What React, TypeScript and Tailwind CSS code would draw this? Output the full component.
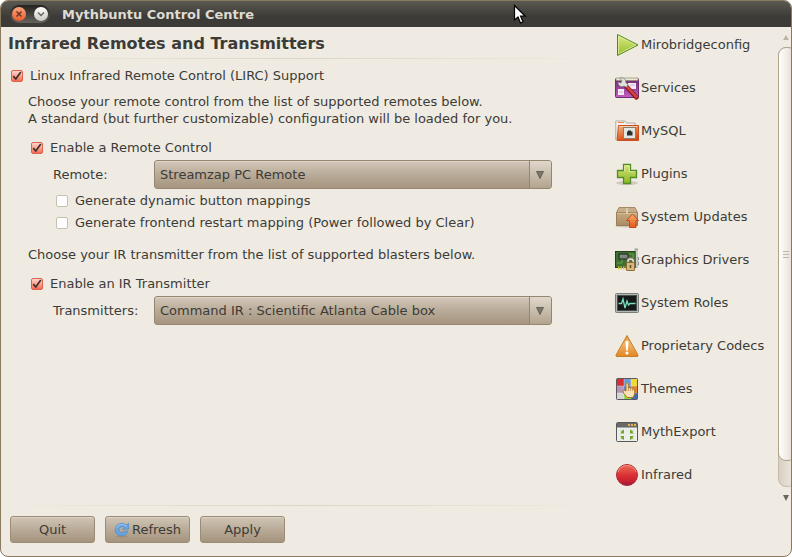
import { useId, useState } from 'react';
import type { ReactNode } from 'react';

interface CheckRowProps {
  label: string;
  checked?: boolean;
  className?: string;
}

const CheckRow = ({ label, checked = false, className = '' }: CheckRowProps) => {
  const [on, setOn] = useState(checked);

  return (
    <label className={`flex h-5 items-center gap-[7px] ${className}`}>
      <span className="grid h-3 w-3 shrink-0">
        <input
          type="checkbox"
          checked={on}
          onChange={(e) => setOn(e.target.checked)}
          className="col-start-1 row-start-1 mt-px h-3 w-3 appearance-none rounded-xs border border-[#c9bfae] bg-white checked:border-[#e0604a] checked:bg-linear-to-b checked:from-[#fbd5cc] checked:to-[#f26a52]"
        />
        {on && (
          <svg className="pointer-events-none col-start-1 row-start-1 mt-px h-3 w-3" viewBox="0 0 12 12" fill="none">
            <path d="M2.2 6.2 L4.8 9 L9.8 2" stroke="#3a2f2b" strokeWidth="1.7" />
          </svg>
        )}
      </span>
      <span>{label}</span>
    </label>
  );
};

interface SelectRowProps {
  label: string;
  options: string[];
}

const SelectRow = ({ label, options }: SelectRowProps) => {
  const id = useId();

  return (
    <div className="mt-[3px] flex items-center pr-[49px] pl-[52px]">
      <label htmlFor={id} className="w-[101px] shrink-0">
        {label}
      </label>
      <div className="relative flex-1">
        <select
          id={id}
          className="block h-[29px] w-full appearance-none rounded-[3px] border border-[#96866f] bg-linear-to-b from-[#d3c8b9] via-[#b9ab98] to-[#a6957f] pr-7 pl-[5px] shadow-[inset_0_1px_0_#ded5c8]"
        >
          {options.map((option) => (
            <option key={option}>{option}</option>
          ))}
        </select>
        <span className="pointer-events-none absolute inset-y-px right-px flex w-[22px] items-center justify-center rounded-r-xs border-l border-[#96866f] bg-linear-to-b from-[#e0d8cb] to-[#b2a48f] pr-0.5">
          <svg width="8" height="8" viewBox="0 0 8 8">
            <path d="M0.5 0.5 H7.5 L4 7.5 Z" fill="#7c776b" stroke="#57534a" strokeWidth="0.8" />
          </svg>
        </span>
      </div>
    </div>
  );
};

const Separator = () => (
  <div className="h-px shrink-0 bg-linear-to-r from-transparent via-[#dcd5c2] to-transparent" />
);

const ActionButton = ({ children }: { children: ReactNode }) => (
  <button
    type="button"
    className="flex h-[27px] w-[85px] items-center justify-center gap-0.5 rounded-[3px] border border-[#9c8c75] bg-linear-to-b from-[#d0c5b6] via-[#b9ab98] to-[#a5947d] shadow-[inset_0_1px_0_#dcd3c6]"
  >
    {children}
  </button>
);

const RefreshIcon = () => (
  <svg width="16" height="16" viewBox="0 0 16 16">
    <ellipse cx="8" cy="14.5" rx="6" ry="1.2" fill="#8c7f6d" opacity=".5" />
    <path
      d="M14.5 1.2 V7.2 H8.5 L10.4 5.3 C7.5 3.8 4.8 5.4 4.9 8 C5 11 9 11.6 10.3 9.3 H13.9 C12.4 15.3 2 15.5 1.2 8.4 C.8 2 7.8-.5 12.6 3.1 Z"
      fill="#6aa5e2"
      stroke="#4f89ca"
      strokeWidth=".7"
    />
    <path d="M2.5 6.2 C3.6 2.4 8.6 1.3 12.4 4.2" fill="none" stroke="#a9cdf2" strokeWidth=".9" />
  </svg>
);

const PlayIcon = () => (
  <>
    <defs>
      <linearGradient id="play" x2="0" y2="1">
        <stop stopColor="#dcea86" />
        <stop offset="1" stopColor="#94bd2b" />
      </linearGradient>
    </defs>
    <path d="M2.5 1.5 L23 12 L2.5 22.5 Z" fill="url(#play)" stroke="#4c8a1c" />
    <path d="M3.5 3.2 L20.8 12 L3.5 20.8 Z" fill="none" stroke="#e6f0a6" strokeWidth=".7" />
  </>
);

const ServicesIcon = () => (
  <>
    <defs>
      <linearGradient id="services" x2="0" y2="1">
        <stop stopColor="#6d2a6c" />
        <stop offset="1" stopColor="#c25fc4" />
      </linearGradient>
    </defs>
    <rect x=".5" y="2.5" width="23" height="19" rx="1" fill="url(#services)" stroke="#702c72" />
    <path d="M1 2 H23 V4.5 H1 Z" fill="#e8e8d5" stroke="#8c8c6d" strokeWidth=".7" />
    <rect x="3" y="13" width="6" height="6" fill="#f5eaf5" />
    <rect x="13" y="7" width="8" height="6" fill="#f5eaf5" />
    <path d="M15 9 H20 M4 16 H8" stroke="#cbb3cf" />
    <path d="M11 10 L21.5 21.5" stroke="#821616" strokeWidth="4.4" strokeLinecap="round" />
    <path d="M11.3 9.8 L21.5 21" stroke="#d34242" strokeWidth="2.6" strokeLinecap="round" />
    <path
      d="M4.5 2.2 L7 4.5 L6 7 L3 6.2 C3 10 6.3 11.5 9 10 L11.2 11.2 L13 8.8 L10.8 6.5 C11 3 8 .8 4.5 2.2 Z"
      fill="#e1e3dc"
      stroke="#81857c"
      strokeWidth=".8"
    />
  </>
);

const FolderIcon = () => (
  <>
    <defs>
      <linearGradient id="folder" x2=".4" y2="1">
        <stop stopColor="#f0bb88" />
        <stop offset="1" stopColor="#dc450f" />
      </linearGradient>
    </defs>
    <path d="M.8 21 V2 H10 L11.5 4 H20 V7" fill="#f4f1ed" stroke="#a9a49c" strokeWidth=".9" />
    <path d="M3 3.5 H9" stroke="#ef8650" />
    <path d="M2 21.5 L3.5 6.5 H23.5 V21.5 Z" fill="url(#folder)" stroke="#c8501e" />
    <path d="M4.5 7.5 H22.5" stroke="#f7d1ae" />
    <rect x="8.5" y="8.5" width="12" height="11" fill="#e4e6e2" stroke="#8b7d77" />
    <path d="M12 16.5 V12.5 H13 V11.5 H16 V12.5 H17.5 V16.5 Z" fill="#292e30" />
  </>
);

const PlusIcon = () => (
  <>
    <defs>
      <linearGradient id="plus" x2="0" y2="1">
        <stop stopColor="#d4e67a" />
        <stop offset="1" stopColor="#8cb626" />
      </linearGradient>
    </defs>
    <ellipse cx="12" cy="21" rx="11" ry="2" fill="#cfc9c0" />
    <path
      d="M8.5 2.5 H15.5 V8.5 H21.5 V15.5 H15.5 V21.5 H8.5 V15.5 H2.5 V8.5 H8.5 Z"
      fill="url(#plus)"
      stroke="#528c25"
      strokeWidth="1.3"
    />
    <path d="M9.7 9.7 V3.7 H14.3 V9.7 H20.3" fill="none" stroke="#e8f3aa" strokeWidth=".8" />
  </>
);

const PackageIcon = () => (
  <>
    <defs>
      <linearGradient id="package" x2="0" y2="1">
        <stop stopColor="#c8aa80" />
        <stop offset="1" stopColor="#a98a62" />
      </linearGradient>
      <linearGradient id="arrow" x2="0" y2="1">
        <stop stopColor="#f7af6c" />
        <stop offset="1" stopColor="#e85719" />
      </linearGradient>
    </defs>
    <ellipse cx="11" cy="21" rx="11" ry="1.5" fill="#ccc4b8" />
    <path d="M1.5 7.5 H22.5 V20.5 H1.5 Z" fill="url(#package)" stroke="#9b7d58" />
    <path d="M1.5 7.5 L4 2.5 H20 L22.5 7.5 Z" fill="#c7ad88" stroke="#a58a66" />
    <path d="M11 3 H13 V9 H11 Z" fill="#dccdb2" />
    <path d="M2.5 8.5 H21.5" stroke="#dac39e" strokeWidth=".8" />
    <path d="M17.5 9 L23.5 15.5 H21 V22.5 H14.5 V15.5 H11.5 Z" fill="url(#arrow)" stroke="#c64a1a" />
  </>
);

const CardIcon = () => (
  <>
    <rect x=".5" y="3.5" width="20" height="16" fill="#3f7030" stroke="#24401b" />
    <path d="M2 15 H7 V9 M13 15 V12 H18 V6 H13" fill="none" stroke="#65a548" />
    <rect x="4" y="6" width="9" height="5" fill="#808681" stroke="#1d221c" />
    <path d="M3 20 H12" stroke="#e1c52b" strokeWidth="3" strokeDasharray="1.5 1" />
    <path d="M19.5 1.5 H23 M21.5 1 V20" stroke="#9ea2a0" strokeWidth="1.8" fill="none" />
    <path d="M21.5 2 V19" stroke="#e3e4e2" strokeWidth=".7" />
    <path d="M22.5 9.5 H23.5 V12 H22.5 M22.5 14 H23.5 V17 H22.5" fill="none" stroke="#8c908d" />
    <path d="M13 14.5 V13 C13 10 18.2 10 18.2 13 V14.5" fill="none" stroke="#7e7157" strokeWidth="2.8" />
    <path d="M13 14.5 V13 C13 10.4 18.2 10.4 18.2 13 V14.5" fill="none" stroke="#e8e5dc" strokeWidth="1.4" />
    <rect x="11.5" y="14.5" width="8" height="8" rx=".5" fill="#d8b77d" stroke="#8c6d3d" />
    <path d="M15.5 17 V20" stroke="#5c4728" strokeWidth="1.5" />
  </>
);

const MonitorIcon = () => (
  <>
    <rect x=".5" y="2.5" width="23" height="19" rx="1" fill="#b4b6b3" stroke="#7b7d79" />
    <rect x="2.5" y="4.5" width="19" height="15" fill="#151a18" stroke="#4b504c" />
    <path
      d="M3.5 12.5 H6.5 L8 8 L10 17 L12 10 L13.5 14 L15 12.5 H20.5"
      fill="none"
      stroke="#7ce0c0"
      strokeWidth="1.3"
    />
  </>
);

const WarningIcon = () => (
  <>
    <defs>
      <linearGradient id="warning" x2="0" y2="1">
        <stop stopColor="#e8963c" />
        <stop offset=".4" stopColor="#f0b567" />
        <stop offset="1" stopColor="#e48421" />
      </linearGradient>
    </defs>
    <path
      d="M12 1.5 L23 21 Q23.5 22.5 22 22.5 H2 Q.5 22.5 1 21 Z"
      fill="url(#warning)"
      stroke="#c6812c"
      strokeLinejoin="round"
    />
    <path d="M10.5 7.5 Q12 6 13.5 7.5 L12.9 16.5 H11.1 Z" fill="#fff" />
    <circle cx="12" cy="19" r="1.6" fill="#fff" />
  </>
);

const ThemesIcon = () => (
  <>
    <rect x="1.5" y="1.5" width="21" height="21" rx="1" fill="#4a76b8" />
    <path d="M2 2 H9 V9 H2 Z" fill="#d92f30" />
    <path d="M9 2 H16 V9 H9 Z" fill="#6e9bd2" />
    <path d="M16 2 H22 V9 H16 Z" fill="#f1d832" />
    <path d="M2 9 H9 V16 H2 Z" fill="#b396b5" />
    <path d="M16 9 H22 V16 H16 Z" fill="#e78328" />
    <path d="M2 16 H9 V22 H2 Z" fill="#d4d6d2" />
    <path d="M9 16 H16 V22 H9 Z" fill="#8ed837" />
    <path d="M16 16 H22 V22 H16 Z" fill="#3f6dad" />
    <path d="M9 2 V22 M16 2 V22 M2 9 H22 M2 16 H22" stroke="#fff" strokeWidth=".6" opacity=".5" />
    <rect x="1.5" y="1.5" width="21" height="21" rx="1" fill="none" stroke="#5d5560" />
    <path
      d="M11 14 V6.5 Q12.2 5 13.3 6.5 V11 Q14.6 9.8 15.6 11.2 Q17 10.3 17.7 11.8 Q19.6 11.4 19.7 13 V17 L18 20.5 H12 L8.5 16 Q7 13.3 9 13 Z"
      fill="#fae1b5"
      stroke="#a66b26"
      strokeWidth=".9"
    />
    <path d="M13.4 11 V14 M15.6 11.5 V14 M17.7 12 V14" stroke="#b67c38" strokeWidth=".8" />
  </>
);

const ExportIcon = () => (
  <>
    <rect x="1.5" y="2.5" width="21" height="19" rx="1" fill="#eceeeb" stroke="#565a56" />
    <path d="M2 3 H22 V7.5 H2 Z" fill="#666965" />
    <path d="M13 5 H21" stroke="#eab54f" strokeWidth="2" strokeDasharray="2 1" />
    <g fill="#73a72d">
      <path d="M5 9.5 L6.5 11 L9 9.5 V13.5 H5 L6.5 12 Z" />
      <path d="M19 9.5 L17.5 11 L15 9.5 V13.5 H19 L17.5 12 Z" />
      <path d="M5 20 L6.5 18.5 L9 20 V16 H5 L6.5 17.5 Z" />
      <path d="M19 20 L17.5 18.5 L15 20 V16 H19 L17.5 17.5 Z" />
    </g>
  </>
);

const RecordIcon = () => (
  <>
    <defs>
      <linearGradient id="record" x2="0" y2="1">
        <stop stopColor="#ec6f58" />
        <stop offset=".5" stopColor="#dc3236" />
        <stop offset=".8" stopColor="#c9202f" />
        <stop offset="1" stopColor="#861a4c" />
      </linearGradient>
    </defs>
    <circle cx="12" cy="12" r="10.5" fill="url(#record)" stroke="#b02a38" />
    <path d="M3 9 A9.5 9.5 0 0 1 21 9" fill="none" stroke="#f19a86" strokeWidth=".9" />
  </>
);

const modules = [
  { name: 'Mirobridgeconfig', icon: <PlayIcon /> },
  { name: 'Services', icon: <ServicesIcon /> },
  { name: 'MySQL', icon: <FolderIcon /> },
  { name: 'Plugins', icon: <PlusIcon /> },
  { name: 'System Updates', icon: <PackageIcon /> },
  { name: 'Graphics Drivers', icon: <CardIcon /> },
  { name: 'System Roles', icon: <MonitorIcon /> },
  { name: 'Proprietary Codecs', icon: <WarningIcon /> },
  { name: 'Themes', icon: <ThemesIcon /> },
  { name: 'MythExport', icon: <ExportIcon /> },
  { name: 'Infrared', icon: <RecordIcon /> },
];

const TitleBar = () => (
  <header className="flex h-[26px] shrink-0 items-center gap-3 bg-linear-to-b from-[#5a5951] to-[#3c3b37] to-60% pl-[9px]">
    <div className="flex h-[18px] w-[40px] items-center justify-between rounded-full bg-linear-to-b from-[#252421] to-[#65635b] px-0.5">
      <button
        type="button"
        aria-label="Close"
        className="flex h-3.5 w-3.5 items-center justify-center rounded-full bg-linear-to-b from-[#f8a27c] to-[#e95c2b]"
      >
        <svg width="8" height="8" viewBox="0 0 8 8">
          <path d="M1.5 1.5 L6.5 6.5 M6.5 1.5 L1.5 6.5" stroke="#6b3423" strokeWidth="1.5" />
        </svg>
      </button>
      <button
        type="button"
        aria-label="Minimise"
        className="flex h-3.5 w-3.5 items-center justify-center rounded-full bg-linear-to-b from-white to-[#cbc8c1]"
      >
        <svg width="8" height="8" viewBox="0 0 8 8">
          <path d="M1 2.5 L4 5.5 L7 2.5" fill="none" stroke="#66645f" strokeWidth="1.4" />
        </svg>
      </button>
    </div>
    <h1 className="font-bold text-[#dfdbd2]">Mythbuntu Control Centre</h1>
  </header>
);

const ScrollBar = () => (
  <div className="flex w-[13px] shrink-0 flex-col overflow-hidden pt-2">
    <svg className="ml-[5px] shrink-0" width="6" height="5" viewBox="0 0 6 5">
      <path d="M3 0 L6 5 H0 Z" fill="#bdb3a3" />
    </svg>
    <div className="mt-[7px] h-[440px] w-[18px] shrink-0 rounded-lg border border-[#c5bba9] bg-linear-to-r from-[#d9d0c2] to-[#efe9e0]">
      <div className="-mt-px -ml-px flex h-[414px] w-[18px] flex-col justify-center gap-0.5 rounded-lg border border-[#b0a28c] bg-linear-to-r from-white to-[#e0d8cc] pl-1">
        <div className="h-px w-1.5 bg-[#c0b6a6]" />
        <div className="h-px w-1.5 bg-[#c0b6a6]" />
        <div className="h-px w-1.5 bg-[#c0b6a6]" />
      </div>
    </div>
    <svg className="mt-2 ml-[5px] shrink-0" width="6" height="6" viewBox="0 0 6 6">
      <path d="M0 0 H6 L3 6 Z" fill="#6b675e" />
    </svg>
  </div>
);

const App = () => {
  return (
    <div className="flex min-h-screen flex-col overflow-hidden rounded-lg border border-[#8a7a60] bg-[#efebe3] font-['DejaVu_Sans',sans-serif] text-[13px] leading-[17px] text-[#3c3b37]">
      <TitleBar />

      <div className="flex flex-1">
        <main className="flex min-w-0 flex-1 flex-col">
          <h2 className="flex h-[31px] items-center pt-px pl-[7px] text-[16px] font-bold">
            Infrared Remotes and Transmitters
          </h2>
          <Separator />

          <CheckRow label="Linux Infrared Remote Control (LIRC) Support" checked className="mt-1.5 pl-2.5" />
          <p className="mt-2 pl-[27px]">
            Choose your remote control from the list of supported remotes below.
            <br />A standard (but further customizable) configuration will be loaded for you.
          </p>

          <CheckRow label="Enable a Remote Control" checked className="mt-2.5 pl-[30px]" />
          <SelectRow label="Remote:" options={['Streamzap PC Remote']} />
          <CheckRow label="Generate dynamic button mappings" className="mt-px pl-[55px]" />
          <CheckRow
            label="Generate frontend restart mapping (Power followed by Clear)"
            className="mt-0.5 pl-[55px]"
          />

          <p className="mt-3.5 pl-[27px]">Choose your IR transmitter from the list of supported blasters below.</p>
          <CheckRow label="Enable an IR Transmitter" checked className="mt-2.5 pl-[30px]" />
          <SelectRow label="Transmitters:" options={['Command IR : Scientific Atlanta Cable box']} />

          {/* Footer actions */}
          <div className="mt-auto pt-6">
            <Separator />
            <div className="flex gap-2.5 pt-2.5 pb-[13px] pl-[9px]">
              <ActionButton>Quit</ActionButton>
              <ActionButton>
                <RefreshIcon />
                Refresh
              </ActionButton>
              <ActionButton>Apply</ActionButton>
            </div>
          </div>
        </main>

        <nav className="ml-[14px] w-[163px] shrink-0 pt-px">
          <ul className="flex flex-col gap-[11px]">
            {modules.map(({ name, icon }) => (
              <li key={name}>
                <button type="button" className="flex h-8 items-center gap-0.5 whitespace-nowrap">
                  <svg className="mt-0.5" width="24" height="24" viewBox="0 0 24 24">
                    {icon}
                  </svg>
                  {name}
                </button>
              </li>
            ))}
          </ul>
        </nav>
        <ScrollBar />
      </div>

      {/* Mouse pointer */}
      <svg className="pointer-events-none absolute top-1 left-[513px]" width="14" height="21" viewBox="0 0 14 21">
        <path
          d="M1.5 1.5 V16 L5 13 L7.5 19 L10 17.8 L7.6 12.2 H12.3 Z"
          fill="#fff"
          stroke="#000"
          strokeWidth="1.2"
        />
      </svg>
    </div>
  );
};

export default App;
